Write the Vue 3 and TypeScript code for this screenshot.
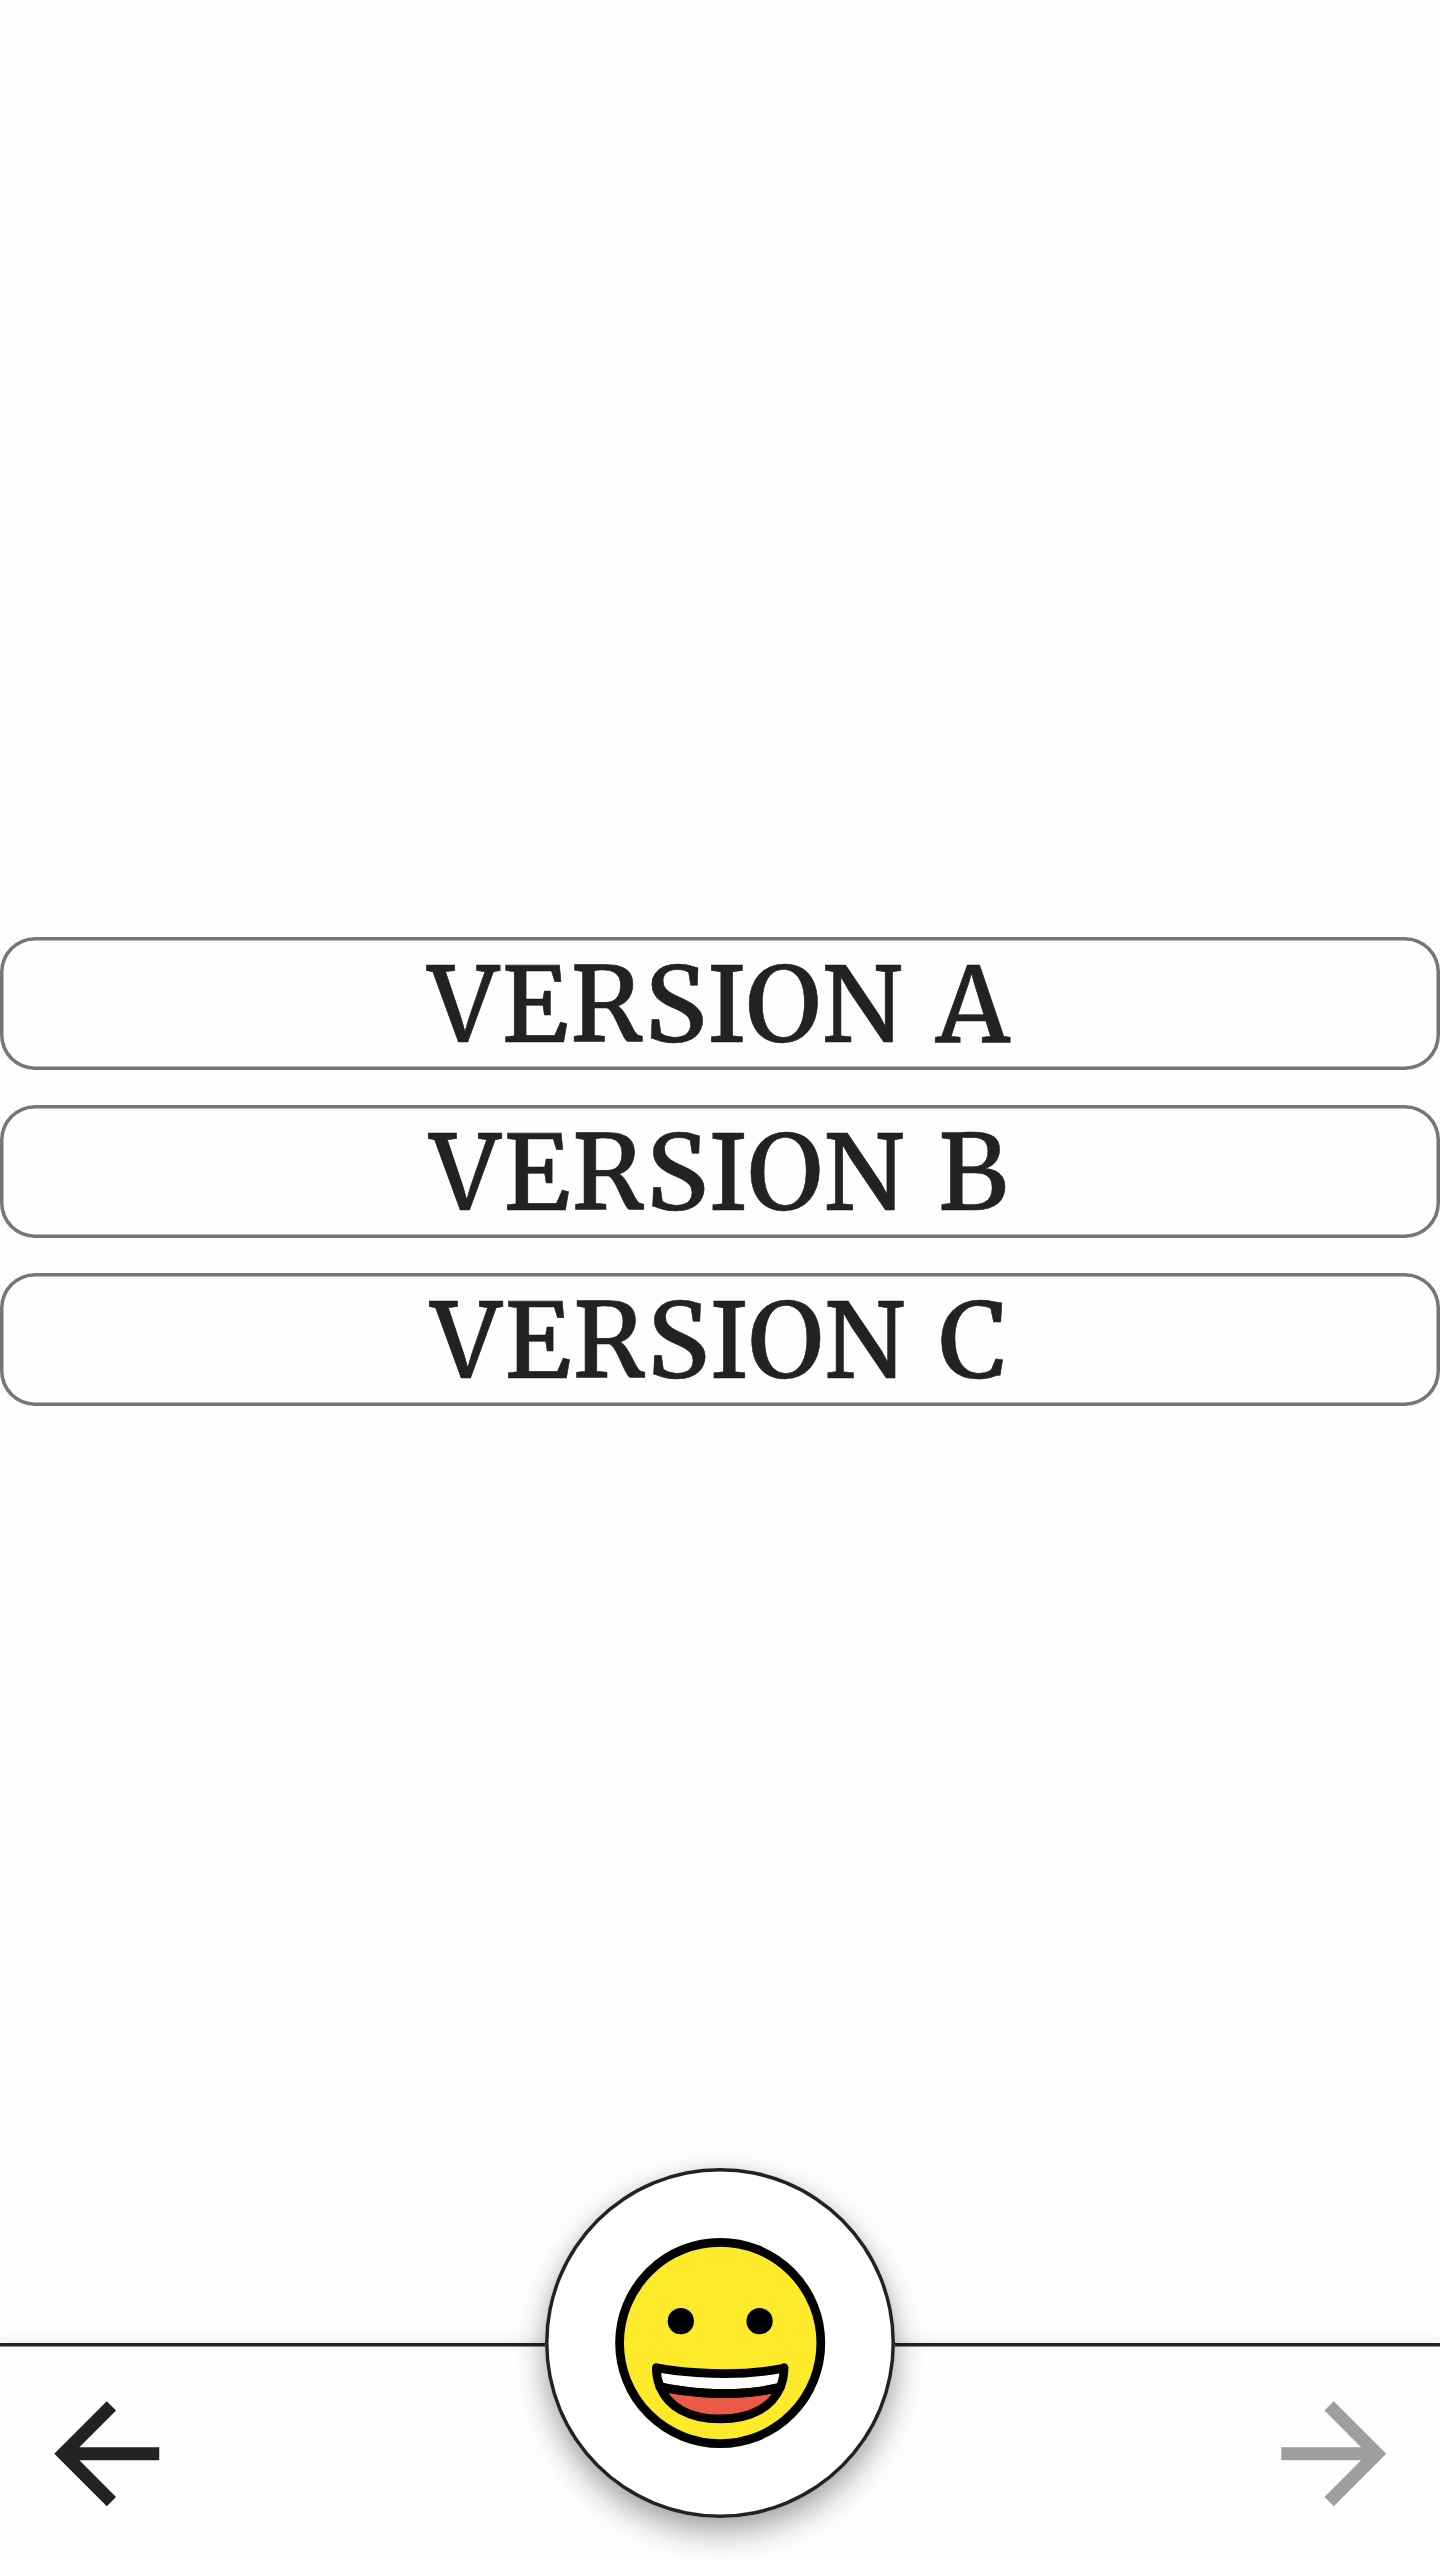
<script setup lang="ts">
const versions: string[] = ['Version A', 'Version B', 'Version C']
</script>

<template>
  <div class="screen">
    <main class="content">
      <button v-for="version in versions" :key="version" class="option" type="button">
        <span class="label">{{ version }}</span>
      </button>
    </main>
    <footer class="bar">
      <button class="nav" type="button" aria-label="Back">
        <svg viewBox="0 0 24 24"><path d="M20 11H7.83l5.59-5.59L12 4l-8 8 8 8 1.41-1.41L7.83 13H20v-2z" /></svg>
      </button>
      <button class="fab" type="button" aria-label="Home">
        <svg viewBox="0 0 72 72">
          <circle cx="36" cy="36" r="23" fill="#fcea2b" />
          <path fill="#fff" d="M50.595 41.64a11.555 11.555 0 0 1-.87 4.49c-12.49 3.03-25.43.34-27.49-.13a11.435 11.435 0 0 1-.83-4.36h.11s14.8 2.95 28.89.15z" />
          <path fill="#ea5a47" d="M49.725 46.13c-1.79 4.27-6.35 7.23-13.69 7.23-7.41 0-12.03-3.03-13.8-7.36 2.06.47 15 3.16 27.49.13z" />
          <g fill="none" stroke="#000" stroke-width="2" stroke-linecap="round" stroke-linejoin="round">
            <circle cx="36" cy="36" r="23" />
            <path d="M50.595 41.64a11.555 11.555 0 0 1-.87 4.49c-12.49 3.03-25.43.34-27.49-.13a11.435 11.435 0 0 1-.83-4.36h.11s14.8 2.95 28.89.15z" />
            <path d="M49.725 46.13c-1.79 4.27-6.35 7.23-13.69 7.23-7.41 0-12.03-3.03-13.8-7.36 2.06.47 15 3.16 27.49.13z" />
          </g>
          <circle cx="27" cy="31" r="3" />
          <circle cx="45" cy="31" r="3" />
        </svg>
      </button>
      <button class="nav" type="button" aria-label="Next" disabled>
        <svg viewBox="0 0 24 24"><path d="M12 4l-1.41 1.41L16.17 11H4v2h12.17l-5.58 5.59L12 20l8-8z" /></svg>
      </button>
    </footer>
  </div>
</template>

<style>
body {
  margin: 0;
  background: #fefefe;
}
</style>

<style scoped>
.screen {
  display: flex;
  flex-direction: column;
  height: 2560px;
  overflow: hidden;
  color: #222;
  font-family: Merriweather, "DejaVu Serif Condensed", "DejaVu Serif", serif;
}
button {
  padding: 0;
  border: 0;
  background: none;
  color: inherit;
  font: inherit;
}
.content {
  flex: 1;
  display: flex;
  flex-direction: column;
  gap: 35px;
  padding-top: 937px;
}
.option {
  display: flex;
  align-items: center;
  justify-content: center;
  height: 133px;
  border-radius: 35px;
  box-shadow: inset 0 0 0 3.5px #757575;
}
.label {
  padding-top: 4px;
  font-size: 104px;
  font-weight: 500;
  -webkit-text-stroke: 0.6px #222;
  letter-spacing: 2px;
  word-spacing: 5px;
  line-height: 129px;
  text-transform: uppercase;
  white-space: nowrap;
}
.bar {
  display: flex;
  align-items: flex-start;
  justify-content: space-between;
  height: 217px;
  box-sizing: border-box;
  padding: 31.5px 28px 0;
  background: linear-gradient(#222 3px, #909090 3px, #909090 4px, #fefefe 4px);
  box-shadow: 0 0 16px rgba(0, 0, 0, 0.1);
}
.nav svg {
  display: block;
  width: 157.5px;
  height: 157.5px;
  fill: #222;
}
.nav:disabled svg {
  fill: #9e9e9e;
}
.fab {
  display: flex;
  align-items: center;
  justify-content: center;
  width: 350px;
  height: 350px;
  margin-top: -206.5px;
  border-radius: 50%;
  background: #fff;
  box-shadow: inset 0 0 0 3.5px #222, 0 14px 32px rgba(0, 0, 0, 0.36), 0 0 16px rgba(0, 0, 0, 0.04);
}
.fab svg {
  flex: none;
  width: 315px;
  height: 315px;
  transform: translate(-0.3px, -0.5px);
}
</style>
